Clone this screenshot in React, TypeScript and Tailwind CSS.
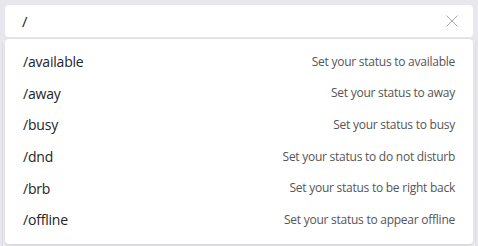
import React from "react";

const items: [string, string][] = [
  ["/available", "Set your status to available"],
  ["/away", "Set your status to away"],
  ["/busy", "Set your status to busy"],
  ["/dnd", "Set your status to do not disturb"],
  ["/brb", "Set your status to be right back"],
  ["/offline", "Set your status to appear offline"],
];

export default function App() {
  return (
    <div
      className="w-[478px] h-[246px] bg-[#e9e7ee] relative overflow-hidden"
      style={{ fontFamily: '"Open Sans", "Noto Sans", sans-serif' }}
    >
      <div className="absolute left-[2px] right-[2px] top-[40px] bottom-0 bg-[#f2f1f4] border-x border-[#e2e0e6]" />
      <div className="relative px-[5px] pt-[5px]">
        <div className="h-[32px] bg-white rounded-[4px] flex items-center pl-[17px] pr-[15px]">
          <span className="flex-1 text-[15px] text-[#242424]">/</span>
          <svg width="12" height="12" viewBox="0 0 12 12" className="shrink-0">
            <path d="M0.5 0.5 L11.5 11.5 M11.5 0.5 L0.5 11.5" stroke="#a8a8a8" strokeWidth="1" fill="none" />
          </svg>
        </div>
        <div className="mt-[2px] bg-white rounded-[4px] shadow-[0_2px_4px_rgba(0,0,0,0.12),0_0_2px_rgba(0,0,0,0.08)] pt-[7px] pb-[8px] px-[18px]">
          {items.map(([cmd, desc]) => (
            <div key={cmd} className="h-[31.6px] flex items-center justify-between">
              <span className="text-[14px] tracking-[-0.2px] text-[#242424]">{cmd}</span>
              <span className="text-[12px] tracking-[-0.25px] text-[#555555]">{desc}</span>
            </div>
          ))}
        </div>
      </div>
    </div>
  );
}
